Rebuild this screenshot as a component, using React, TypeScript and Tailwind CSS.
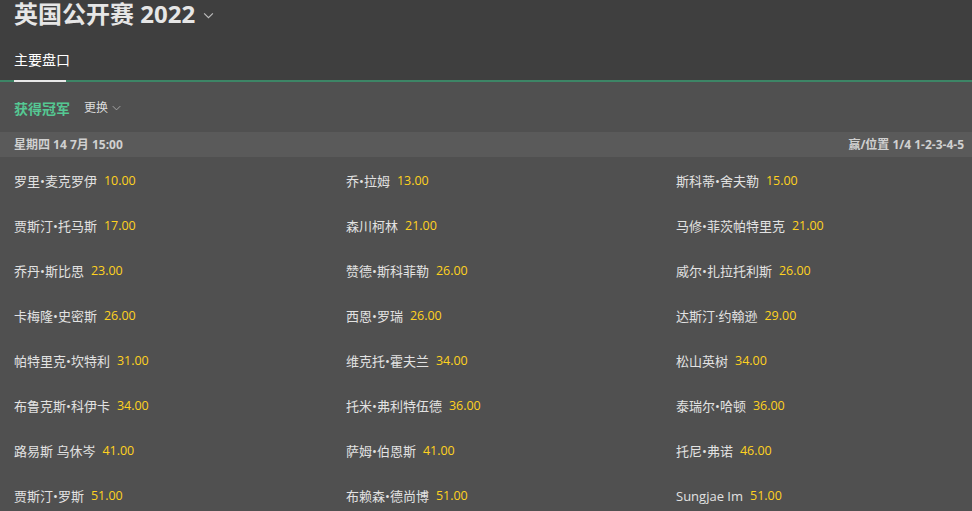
const FONT = "font-['Open_Sans','Noto_Sans_CJK_SC',sans-serif]";

const runners: [string, string][] = [
  ["罗里•麦克罗伊", "10.00"],
  ["乔•拉姆", "13.00"],
  ["斯科蒂•舍夫勒", "15.00"],
  ["贾斯汀•托马斯", "17.00"],
  ["森川柯林", "21.00"],
  ["马修•菲茨帕特里克", "21.00"],
  ["乔丹•斯比思", "23.00"],
  ["赞德•斯科菲勒", "26.00"],
  ["威尔•扎拉托利斯", "26.00"],
  ["卡梅隆•史密斯", "26.00"],
  ["西恩•罗瑞", "26.00"],
  ["达斯汀·约翰逊", "29.00"],
  ["帕特里克•坎特利", "31.00"],
  ["维克托•霍夫兰", "34.00"],
  ["松山英树", "34.00"],
  ["布鲁克斯•科伊卡", "34.00"],
  ["托米•弗利特伍德", "36.00"],
  ["泰瑞尔•哈顿", "36.00"],
  ["路易斯 乌休岑", "41.00"],
  ["萨姆•伯恩斯", "41.00"],
  ["托尼•弗诺", "46.00"],
  ["贾斯汀•罗斯", "51.00"],
  ["布赖森•德尚博", "51.00"],
  ["Sungjae Im", "51.00"],
];

function Chevron({ className }: { className?: string }) {
  return (
    <svg viewBox="0 0 12 8" className={className} fill="none" stroke="currentColor" strokeWidth="1.3">
      <path d="M1 1.5 L6 6.5 L11 1.5" />
    </svg>
  );
}

export default function App() {
  return (
    <div className={`w-[972px] h-[511px] overflow-hidden bg-[#505050] ${FONT}`}>
      {/* Header */}
      <div className="bg-[#3f3f3f] px-[14px]">
        <div className="flex items-center h-[28px]">
          <h1 className="text-[24px] font-bold text-[#e6e6e6] leading-none">英国公开赛 2022</h1>
          <Chevron className="w-[11px] h-[7px] ml-[8px] mt-[3px] text-[#bdbdbd]" />
        </div>
        <div className="flex h-[52px] items-center pt-[12px]">
          <span className="text-[14px] text-white leading-none">主要盘口</span>
        </div>
      </div>
      <div className="relative h-[2px] bg-[#3d8566]">
        <div className="absolute left-[14px] top-0 h-[2px] w-[52px] bg-[#e8e8e8]" />
      </div>

      {/* Market title */}
      <div className="flex items-center h-[50px] px-[14px] pt-[2px]">
        <span className="text-[14px] font-bold text-[#55c893]">获得冠军</span>
        <span className="ml-[14px] text-[12px] text-[#dcdcdc]">更换</span>
        <Chevron className="w-[9px] h-[6px] ml-[4px] text-[#a8a8a8]" />
      </div>

      {/* Event row */}
      <div className="flex items-center justify-between h-[25px] px-[14px] bg-[#5a5a5a] text-[12px] font-bold text-[#d0d0d0]">
        <span>星期四 14 7月 15:00</span>
        <span className="mr-[-6px]">赢/位置 1/4 1-2-3-4-5</span>
      </div>

      {/* Runners */}
      <div className="grid grid-cols-[332px_330px_1fr] pl-[14px] pt-[2px]">
        {runners.map(([name, odds]) => (
          <div key={name} className="flex items-center h-[45px] text-[13px]">
            <span className="text-[#e2e2e2]">{name}</span>
            <span className="ml-[7px] text-[#ffd21f] text-[12.5px]">{odds}</span>
          </div>
        ))}
      </div>
    </div>
  );
}
